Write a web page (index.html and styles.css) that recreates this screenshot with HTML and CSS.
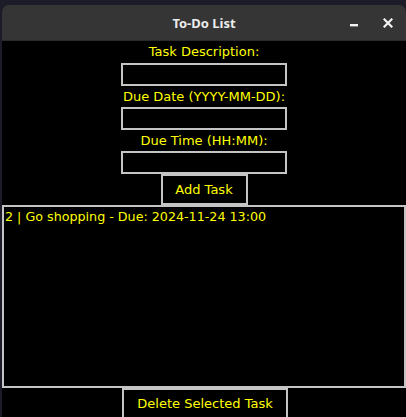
FILE: index.html
```html
<!DOCTYPE html>
<html>
<head>
<meta charset="utf-8">
<link rel="stylesheet" href="styles.css">
</head>
<body>
<div class="desktop">
  <div class="window">
    <div class="titlebar">
      <span class="spacer"></span>
      <span class="title">To-Do List</span>
      <div class="controls">
        <span class="ctl"><svg width="10" height="10" viewBox="0 0 10 10"><rect x="1" y="6" width="8" height="2.4" fill="#f2f2f2"/></svg></span>
        <span class="ctl"><svg width="10" height="10" viewBox="0 0 10 10"><path d="M1.5 1.5 L8.5 8.5 M8.5 1.5 L1.5 8.5" stroke="#f2f2f2" stroke-width="2.2" stroke-linecap="square"/></svg></span>
      </div>
    </div>
    <div class="content">
      <div class="lbl first">Task Description:</div>
      <div class="entry"></div>
      <div class="lbl">Due Date (YYYY-MM-DD):</div>
      <div class="entry"></div>
      <div class="lbl">Due Time (HH:MM):</div>
      <div class="entry"></div>
      <button class="btn add">Add Task</button>
      <div class="listbox">
        <div class="item">2 | Go shopping - Due: 2024-11-24 13:00</div>
      </div>
      <button class="btn del">Delete Selected Task</button>
    </div>
  </div>
</div>
</body>
</html>
```
FILE: styles.css
```css
html, body {
  margin: 0;
  padding: 0;
  height: 100%;
  overflow: hidden;
  background: #1b1c28;
}

.desktop {
  padding: 5px 0 0 2px;
  height: 100%;
  box-sizing: border-box;
}

.window {
  width: 404px;
  height: 100%;
  border-radius: 7px 7px 0 0;
  overflow: hidden;
  display: flex;
  flex-direction: column;
}

.titlebar {
  height: 36px;
  flex: none;
  background: #353535;
  display: grid;
  grid-template-columns: 1fr auto 1fr;
  align-items: center;
  border-bottom: 1px solid #2a2a2a;
  box-sizing: border-box;
}

.title {
  font-family: "Noto Sans", sans-serif;
  font-weight: bold;
  font-size: 13px;
  color: #ececec;
  padding-top: 1px;
}

.controls {
  justify-self: end;
  display: flex;
  gap: 14px;
  padding-right: 8px;
}

.ctl {
  width: 20px;
  height: 20px;
  display: flex;
  align-items: center;
  justify-content: center;
}

.content {
  flex: 1;
  background: #000;
  display: flex;
  flex-direction: column;
  align-items: center;
  font-family: "DejaVu Sans", sans-serif;
  font-size: 13px;
  color: #ffff00;
}

.lbl {
  height: 21px;
  line-height: 21px;
  white-space: nowrap;
}

.lbl.first {
  height: 22px;
  line-height: 22px;
}

.entry {
  width: 166px;
  height: 23px;
  box-sizing: border-box;
  border: 2px solid #c4c4c4;
  background: #000;
}

.btn {
  font-family: "DejaVu Sans", sans-serif;
  font-size: 13px;
  color: #ffff00;
  background: #000;
  border: 2px solid #c4c4c4;
  box-sizing: border-box;
  height: 31px;
  padding: 0;
  margin: 0;
}

.btn.add {
  width: 87px;
}

.btn.del {
  width: 166px;
  height: 31px;
  margin-left: 2px;
}

.listbox {
  align-self: stretch;
  height: 183px;
  flex: none;
  box-sizing: border-box;
  border: 2px solid #c4c4c4;
  padding: 1px 1px;
}

.item {
  height: 17px;
  line-height: 17px;
  font-size: 12.7px;
  white-space: nowrap;
}
```
